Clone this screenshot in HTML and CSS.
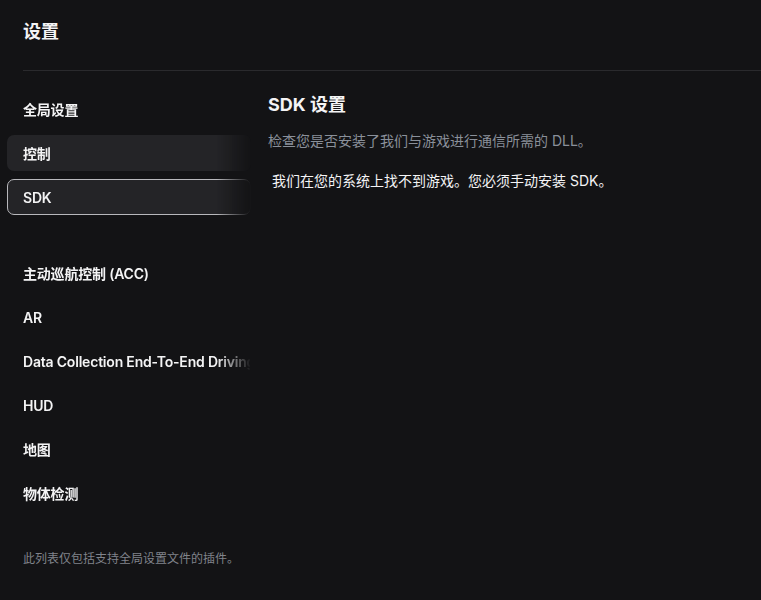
FILE: index.html
```html
<!DOCTYPE html>
<html lang="zh-CN">
<head>
<meta charset="utf-8">
<title>设置</title>
<link rel="stylesheet" href="styles.css">
</head>
<body>
<div class="page">
  <header class="header">
    <h1 class="title">设置</h1>
  </header>
  <div class="body">
    <aside class="sidebar">
      <nav class="nav">
        <div class="group">
          <div class="item">全局设置</div>
          <div class="item item-filled">控制</div>
          <div class="item item-active">SDK</div>
        </div>
        <div class="group">
          <div class="item">主动巡航控制 (ACC)</div>
          <div class="item">AR</div>
          <div class="item">Data Collection End-To-End Driving</div>
          <div class="item">HUD</div>
          <div class="item">地图</div>
          <div class="item">物体检测</div>
        </div>
      </nav>
      <p class="footnote">此列表仅包括支持全局设置文件的插件。</p>
    </aside>
    <main class="main">
      <h2 class="heading">SDK 设置</h2>
      <p class="desc">检查您是否安装了我们与游戏进行通信所需的 DLL。</p>
      <p class="msg">我们在您的系统上找不到游戏。您必须手动安装 SDK。</p>
    </main>
  </div>
</div>
</body>
</html>
```
FILE: styles.css
```css
* { box-sizing: border-box; }
html, body {
  margin: 0;
  padding: 0;
  background: #131315;
  color: #f4f4f5;
  font-family: Inter, "Noto Sans CJK SC", sans-serif;
}
.page {
  width: 761px;
  height: 600px;
  overflow: hidden;
}
.header {
  margin-left: 23px;
  height: 71px;
  border-bottom: 1px solid #2a2a2d;
  display: flex;
  align-items: center;
}
.title {
  margin: 0;
  font-size: 18px;
  font-weight: 700;
  line-height: 24px;
  margin-top: -6px;
}
.body {
  display: flex;
  gap: 17px;
  padding-top: 20px;
}
.sidebar {
  width: 251px;
  padding-left: 7px;
  flex: none;
}
.nav {
  display: flex;
  flex-direction: column;
  gap: 40px;
  -webkit-mask-image: linear-gradient(to right, #000 86%, transparent 100%);
  mask-image: linear-gradient(to right, #000 86%, transparent 100%);
}
.group {
  display: flex;
  flex-direction: column;
  gap: 8px;
}
.item {
  height: 36px;
  padding-left: 15px;
  display: flex;
  align-items: center;
  font-size: 14px;
  font-weight: 600;
  letter-spacing: -0.2px;
  white-space: nowrap;
  overflow: hidden;
  border-radius: 7px;
  border: 1px solid transparent;
  color: #f4f4f5;
}
.item-filled {
  background: #242427;
}
.item-active {
  background: #242427;
  border-color: #b8b8bc;
}
.footnote {
  margin: 38px 0 0 16px;
  font-size: 12px;
  line-height: 20px;
  color: #80838b;
}
.main {
  flex: 1;
  padding-top: 2px;
}
.heading {
  margin: 0;
  font-size: 18px;
  font-weight: 700;
  line-height: 24px;
}
.desc {
  margin: 14px 0 0;
  font-size: 14px;
  line-height: 20px;
  color: #8a909a;
}
.msg {
  margin: 20px 0 0 4px;
  font-size: 14px;
  line-height: 20px;
  color: #f4f4f5;
}
```
